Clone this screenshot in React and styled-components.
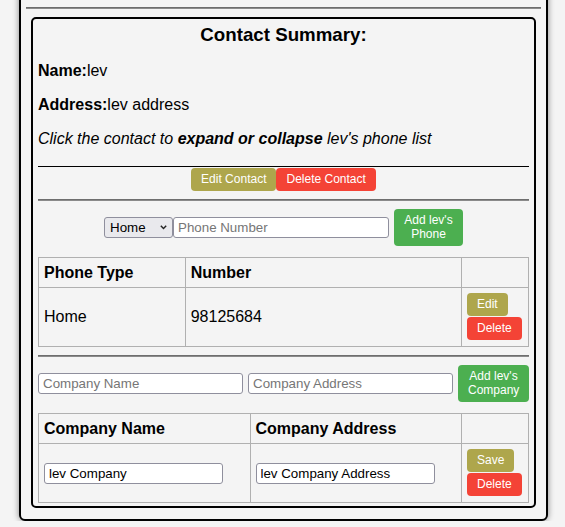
import React from 'react'
import styled, { createGlobalStyle } from 'styled-components'

const GlobalStyle = createGlobalStyle`
  html, body {
    margin: 0;
    background: #f4f4f4;
    font-family: "Liberation Sans", Arial, sans-serif;
    color: #000;
    overflow: hidden;
  }
`

const Page = styled.div`
  padding: 0 17px 0 19px;
`

const ContactCard = styled.div`
  margin-top: -10px;
  border: 2px solid #000;
  border-radius: 6px;
  box-shadow: 0 0 6px rgba(0, 0, 0, 0.45);
  padding: 0 5px 5px;
  background: #f4f4f4;
`

const Rule = styled.hr`
  margin: ${(p) => p.$margin || '8px 0'};
  border: 0;
  border-top: 1px solid #6e6e6e;
  border-bottom: 1px solid #8a8a8a;
`

const Summary = styled.div`
  margin: 8px 5px 6px;
  border: 2px solid #000;
  border-radius: 5px;
  padding: 5px 5px 3px;
`

const Title = styled.h3`
  margin: 0;
  font-size: 18.72px;
  font-weight: bold;
  text-align: center;
`

const Line = styled.p`
  margin: 16px 0;
  font-size: 16px;
  font-style: ${(p) => (p.$italic ? 'italic' : 'normal')};
`

const ActionBar = styled.div`
  display: flex;
  justify-content: center;
  margin-top: 18px;
  border-top: 1px solid #000;
  padding-top: 1px;
`

const colors = {
  olive: '#aea64c',
  red: '#f44336',
  green: '#4caf50',
}

const Button = styled.button`
  font-family: "Liberation Sans", Arial, sans-serif;
  font-size: 12px;
  line-height: 13px;
  color: #fff;
  background: ${(p) => colors[p.$tone]};
  border: 0;
  border-radius: 4px;
  padding: 5px 10px;
  cursor: pointer;
  text-align: center;
`

const AddButton = styled(Button)`
  line-height: 13.5px;
  max-width: ${(p) => p.$max};
  flex-shrink: 0;
`

const PhoneForm = styled.div`
  display: flex;
  justify-content: center;
  align-items: center;
`

const SelectWrap = styled.div`
  position: relative;
  display: flex;
`

const Select = styled.select`
  appearance: none;
  width: 69px;
  height: 21px;
  padding: 0 0 0 5px;
  font-family: "Liberation Sans", Arial, sans-serif;
  font-size: 13.33px;
  color: #000;
  background: #e9e9ed;
  border: 1px solid #8f8f9d;
  border-radius: 3px;
`

const Chevron = styled.svg`
  position: absolute;
  right: 6px;
  top: 8px;
  pointer-events: none;
`

const Input = styled.input`
  box-sizing: border-box;
  width: ${(p) => p.$w || 'auto'};
  flex: ${(p) => (p.$grow ? '1 1 0' : '0 0 auto')};
  min-width: 0;
  height: 21px;
  padding: 2px 4px;
  font-family: "Liberation Sans", Arial, sans-serif;
  font-size: 13.33px;
  color: #000;
  background: #fff;
  border: 1px solid #8f8f9d;
  border-radius: 3px;
  margin-right: ${(p) => p.$gap || '0'};
  &::placeholder {
    color: #767676;
  }
`

const CompanyForm = styled.div`
  display: flex;
  align-items: center;
  gap: 5px;
`

const Table = styled.table`
  width: 100%;
  margin-top: 11px;
  border-collapse: collapse;
  font-size: 16px;
`

const Th = styled.th`
  width: ${(p) => p.$w};
  height: 19px;
  border: 1px solid #b0b0b0;
  padding: 5px;
  text-align: left;
  font-weight: bold;
`

const Td = styled.td`
  border: 1px solid #b0b0b0;
  padding: 5px;
  vertical-align: middle;
`

const ActionCell = styled.div`
  display: flex;
  flex-direction: column;
  align-items: flex-start;
  gap: 1px;
  margin-bottom: 1px;
`

const App = () => {
  return (
    <Page>
      <GlobalStyle />
      <ContactCard>
        <Rule $margin='15px 0 0' />
        <Summary>
          <Title>Contact Summary:</Title>
          <Line>
            <b>Name:</b>lev
          </Line>
          <Line>
            <b>Address:</b>lev address
          </Line>
          <Line $italic>
            Click the contact to <b>expand or collapse</b> lev's phone list
          </Line>
          <ActionBar>
            <Button $tone='olive'>Edit Contact</Button>
            <Button $tone='red'>Delete Contact</Button>
          </ActionBar>
          <Rule />
          <PhoneForm>
            <SelectWrap>
              <Select defaultValue='Home'>
                <option>Home</option>
                <option>Work</option>
                <option>Cell</option>
              </Select>
              <Chevron width='7' height='5' viewBox='0 0 7 5'>
                <path d='M0.8 0.8 L3.5 3.6 L6.2 0.8' fill='none' stroke='#222' strokeWidth='1.4' />
              </Chevron>
            </SelectWrap>
            <Input $w='216px' $gap='5px' placeholder='Phone Number' />
            <AddButton $tone='green' $max='69px'>Add lev's Phone</AddButton>
          </PhoneForm>
          <Table>
            <thead>
              <tr>
                <Th $w='136px'>Phone Type</Th>
                <Th $w='266px'>Number</Th>
                <Th $w='56px'></Th>
              </tr>
            </thead>
            <tbody>
              <tr>
                <Td>Home</Td>
                <Td>98125684</Td>
                <Td>
                  <ActionCell>
                    <Button $tone='olive'>Edit</Button>
                    <Button $tone='red'>Delete</Button>
                  </ActionCell>
                </Td>
              </tr>
            </tbody>
          </Table>
          <Rule />
          <CompanyForm>
            <Input $grow placeholder='Company Name' />
            <Input $grow placeholder='Company Address' />
            <AddButton $tone='green' $max='71px'>Add lev's Company</AddButton>
          </CompanyForm>
          <Table>
            <thead>
              <tr>
                <Th $w='201px'>Company Name</Th>
                <Th $w='201px'>Company Address</Th>
                <Th $w='56px'></Th>
              </tr>
            </thead>
            <tbody>
              <tr>
                <Td>
                  <Input $w='179px' defaultValue='lev Company' />
                </Td>
                <Td>
                  <Input $w='179px' defaultValue='lev Company Address' />
                </Td>
                <Td>
                  <ActionCell>
                    <Button $tone='olive'>Save</Button>
                    <Button $tone='red'>Delete</Button>
                  </ActionCell>
                </Td>
              </tr>
            </tbody>
          </Table>
        </Summary>
      </ContactCard>
    </Page>
  )
}

export default App
